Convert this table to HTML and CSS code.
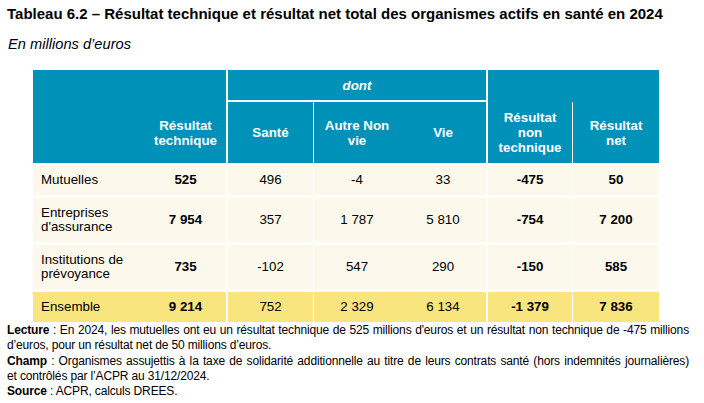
FILE: index.html
```html
<!DOCTYPE html>
<html lang="fr">
<head>
<meta charset="utf-8">
<title>Tableau 6.2</title>
<link rel="stylesheet" href="styles.css">
</head>
<body>
<div class="page">
  <h1 class="title">Tableau 6.2 – Résultat technique et résultat net total des organismes actifs en santé en 2024</h1>
  <p class="unit">En millions d’euros</p>
  <table class="data">
    <colgroup>
      <col class="c-label">
      <col class="c-tech">
      <col class="c-sante">
      <col class="c-autre">
      <col class="c-vie">
      <col class="c-nontech">
      <col class="c-net">
    </colgroup>
    <thead>
      <tr class="h1">
        <th colspan="2" class="sep2"></th>
        <th colspan="3" class="dont sep2">dont</th>
        <th colspan="2"></th>
      </tr>
      <tr class="h2">
        <th></th>
        <th class="sep2">Résultat<br>technique</th>
        <th class="sep1">Santé</th>
        <th>Autre Non<br>vie</th>
        <th class="sep2">Vie</th>
        <th class="sep1">Résultat<br>non<br>technique</th>
        <th>Résultat<br>net</th>
      </tr>
    </thead>
    <tbody>
      <tr class="r-short">
        <td class="label">Mutuelles</td>
        <td class="b sep2">525</td>
        <td class="sep1">496</td>
        <td>-4</td>
        <td class="sep2">33</td>
        <td class="b sep1">-475</td>
        <td class="b">50</td>
      </tr>
      <tr class="r-tall">
        <td class="label">Entreprises<br>d'assurance</td>
        <td class="b sep2">7 954</td>
        <td class="sep1">357</td>
        <td>1 787</td>
        <td class="sep2">5 810</td>
        <td class="b sep1">-754</td>
        <td class="b">7 200</td>
      </tr>
      <tr class="r-tall">
        <td class="label">Institutions de<br>prévoyance</td>
        <td class="b sep2">735</td>
        <td class="sep1">-102</td>
        <td>547</td>
        <td class="sep2">290</td>
        <td class="b sep1">-150</td>
        <td class="b">585</td>
      </tr>
      <tr class="r-short total">
        <td class="label">Ensemble</td>
        <td class="b sep2">9 214</td>
        <td class="sep1">752</td>
        <td>2 329</td>
        <td class="sep2">6 134</td>
        <td class="b sep1">-1 379</td>
        <td class="b">7 836</td>
      </tr>
    </tbody>
  </table>
  <div class="notes">
    <p><b>Lecture</b> : En 2024, les mutuelles ont eu un résultat technique de 525 millions d'euros et un résultat non technique de -475 millions d’euros, pour un résultat net de 50 millions d’euros.</p>
    <p><b>Champ</b> : Organismes assujettis à la taxe de solidarité additionnelle au titre de leurs contrats santé (hors indemnités journalières) et&nbsp;contrôlés par l’ACPR au 31/12/2024.</p>
    <p><b>Source</b> : ACPR, calculs DREES.</p>
  </div>
</div>
</body>
</html>
```

FILE: styles.css
```css
html, body {
  margin: 0;
  padding: 0;
  background: #ffffff;
}
body {
  font-family: "Liberation Sans", Arial, sans-serif;
  color: #000000;
}
.page {
  width: 704px;
  height: 403px;
  padding: 5px 0 0 7px;
  box-sizing: border-box;
}
.title {
  margin: 0;
  font-size: 15px;
  font-weight: bold;
  line-height: 18px;
}
.unit {
  margin: 12px 0 0 1px;
  font-size: 14.67px;
  font-style: italic;
  line-height: 18px;
}
.data {
  margin: 17px 0 0 26px;
  border-collapse: separate;
  border-spacing: 0;
  table-layout: fixed;
  width: 626px;
  font-size: 13.33px;
}
.c-label { width: 112px; }
.c-tech { width: 83px; }
.c-sante { width: 86px; }
.c-autre { width: 86px; }
.c-vie { width: 88px; }
.c-nontech { width: 85px; }
.c-net { width: 86px; }

.data th {
  background: #0091b9;
  color: #ffffff;
  font-weight: bold;
  padding: 0;
  text-align: center;
  vertical-align: middle;
  line-height: 15px;
}
.h1 th {
  height: 30px;
}
.h1 .dont {
  font-style: italic;
  border-bottom: 2px solid #ffffff;
}
.h2 th {
  height: 61px;
  border-bottom: 2px solid #ffffff;
}
.sep2 { border-right: 2px solid #ffffff; }
.sep1 { border-right: 1px solid #ffffff; }

.data td {
  background: #fcf8ec;
  padding: 0;
  text-align: center;
  vertical-align: middle;
  line-height: 14.5px;
}
.data td.label {
  text-align: left;
  padding-left: 8px;
}
.data td.b { font-weight: bold; }
.data tbody tr:not(:last-child) td {
  border-bottom: 3px solid #ffffff;
}
.r-short td { height: 30px; }
.r-tall td { height: 44px; }
.total td { background: #f9e57e; }

.notes {
  margin-top: 1px;
  font-size: 12px;
  line-height: 15.3px;
  letter-spacing: -0.15px;
  width: 682px;
  text-align: justify;
}
.notes p {
  margin: 0;
}
```
